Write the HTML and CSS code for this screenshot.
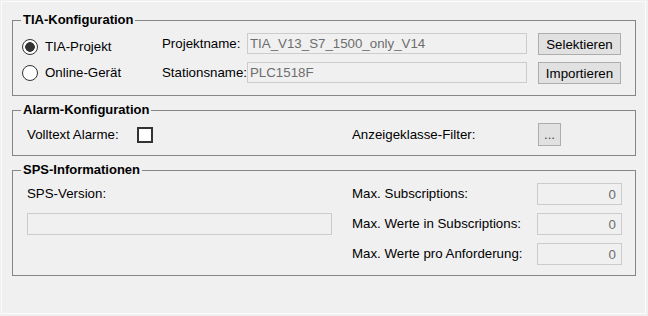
FILE: index.html
```html
<!DOCTYPE html>
<html lang="de">
<head>
<meta charset="utf-8">
<title>Konfiguration</title>
<link rel="stylesheet" href="styles.css">
</head>
<body>
<div class="window">
  <fieldset class="group">
    <legend>TIA-Konfiguration</legend>
    <div class="tia-grid">
      <div class="radios">
        <label class="radio-row"><input type="radio" name="src" class="radio" checked>TIA-Projekt</label>
        <label class="radio-row"><input type="radio" name="src" class="radio">Online-Gerät</label>
      </div>
      <span class="lbl">Projektname:</span>
      <input class="field" type="text" readonly value="TIA_V13_S7_1500_only_V14">
      <button class="btn">Selektieren</button>
      <span class="lbl">Stationsname:</span>
      <input class="field" type="text" readonly value="PLC1518F">
      <button class="btn">Importieren</button>
    </div>
  </fieldset>

  <fieldset class="group gap-top">
    <legend>Alarm-Konfiguration</legend>
    <div class="alarm-grid">
      <span class="lbl">Volltext Alarme:</span>
      <input type="checkbox" class="check">
      <span></span>
      <span class="lbl">Anzeigeklasse-Filter:</span>
      <button class="btn btn-dots">...</button>
    </div>
  </fieldset>

  <fieldset class="group gap-top">
    <legend>SPS-Informationen</legend>
    <div class="sps-grid">
      <span class="lbl">SPS-Version:</span>
      <span></span>
      <span class="lbl">Max. Subscriptions:</span>
      <input class="field num" type="text" readonly value="0">
      <input class="field version" type="text" readonly value="">
      <span></span>
      <span class="lbl">Max. Werte in Subscriptions:</span>
      <input class="field num" type="text" readonly value="0">
      <span></span>
      <span></span>
      <span class="lbl">Max. Werte pro Anforderung:</span>
      <input class="field num" type="text" readonly value="0">
    </div>
  </fieldset>
</div>
</body>
</html>
```

FILE: styles.css
```css
html, body {
  margin: 0;
  padding: 0;
  background: #f0f0f0;
}

body {
  font-family: "Liberation Sans", Arial, sans-serif;
  font-size: 13.3px;
  color: #000;
}

.window {
  margin: 1px;
  width: 645px;
  height: 313px;
  box-sizing: border-box;
  border: 1px solid #fbfbfb;
  padding: 10px 0 0 10px;
}

.group {
  margin: 0;
  padding: 0;
  min-width: 0;
  width: 624px;
  box-sizing: border-box;
  border: 1px solid #868686;
}

.gap-top {
  margin-top: 6px;
}

.group legend {
  margin-left: 8px;
  padding: 0 2px;
  font-weight: bold;
  font-size: 13px;
  line-height: 16px;
}

.lbl {
  align-self: center;
  white-space: nowrap;
  line-height: 16px;
}

/* TIA */
.tia-grid {
  display: grid;
  grid-template-columns: 140px 85px 280px 94px;
  grid-template-rows: 22px 22px;
  row-gap: 7px;
  padding: 5px 0 11px 9px;
}

.radios {
  grid-row: 1 / span 2;
  display: flex;
  flex-direction: column;
  gap: 10px;
  padding-top: 6px;
}

.radio-row {
  display: flex;
  align-items: center;
  gap: 7px;
  height: 16px;
  line-height: 16px;
}

.radio {
  appearance: none;
  -webkit-appearance: none;
  margin: 0;
  width: 16px;
  height: 16px;
  box-sizing: border-box;
  border: 1px solid #333;
  border-radius: 50%;
  background: #fff;
}

.radio:checked {
  background: radial-gradient(circle, #333 0 4.5px, #fff 5.1px);
}

.field {
  margin: 0;
  height: 21px;
  box-sizing: border-box;
  border: 1px solid #cccccc;
  background: #f0f0f0;
  color: #6d6d6d;
  font: inherit;
  padding: 0 2px;
  outline: none;
}

.btn {
  margin: 0;
  width: 83px;
  height: 22px;
  box-sizing: border-box;
  border: 1px solid #adadad;
  background: #e1e1e1;
  color: #000;
  font: inherit;
  padding: 0;
  justify-self: end;
}

/* Alarm */
.alarm-grid {
  display: grid;
  grid-template-columns: 110px 16px 199px 186px 23px;
  grid-template-rows: 23px;
  padding: 5px 0 9px 14px;
}

.check {
  appearance: none;
  -webkit-appearance: none;
  margin: 0;
  width: 16px;
  height: 16px;
  box-sizing: border-box;
  border: 2px solid #333;
  background: #fff;
  align-self: center;
}

.btn-dots {
  width: 23px;
  height: 23px;
  color: #444;
  line-height: 16px;
}

/* SPS */
.sps-grid {
  display: grid;
  grid-template-columns: 305px 20px 185px 85px;
  grid-template-rows: 22px 22px 22px;
  row-gap: 8px;
  padding: 5px 0 10px 14px;
}

.sps-grid .field {
  height: 22px;
}

.num {
  text-align: right;
  padding-right: 5px;
}

.version {
  width: 305px;
}
```
